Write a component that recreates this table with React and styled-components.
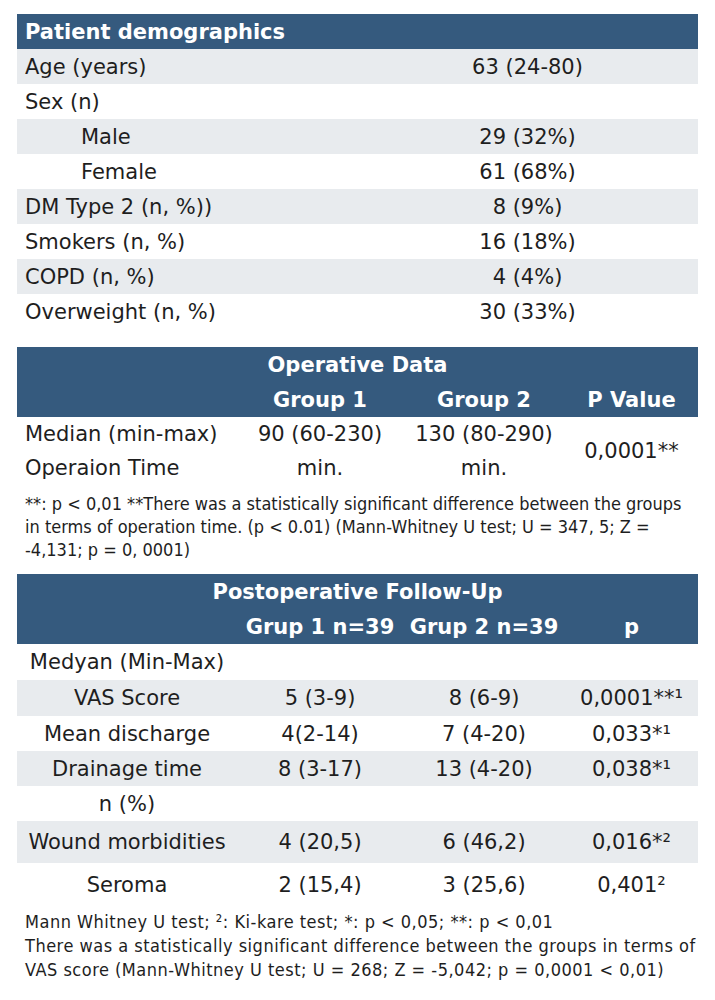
import React from 'react'
import styled, { createGlobalStyle } from 'styled-components'

const GlobalStyle = createGlobalStyle`
  body {
    margin: 0;
    background: #fff;
    color: #1e1e1e;
    font-family: "DejaVu Sans", "Noto Sans", sans-serif;
  }
`

const Page = styled.div`
  width: 681px;
  padding: 14px 17px 0 17px;
  display: flex;
  flex-direction: column;
`

const Table = styled.div`
  display: flex;
  flex-direction: column;
  margin-top: ${p => p.$gap || 0}px;
`

const TitleBar = styled.div`
  background: #355a7e;
  color: #fff;
  font-weight: bold;
  font-size: 21px;
  height: 35px;
  display: flex;
  align-items: center;
  justify-content: ${p => (p.$center ? 'center' : 'flex-start')};
  padding-left: ${p => (p.$center ? 0 : 8)}px;
`

const DemoRow = styled.div`
  display: grid;
  grid-template-columns: 340px 1fr;
  height: 35px;
  align-items: center;
  font-size: 21px;
  background: ${p => (p.$shade ? '#e8ebee' : '#fff')};
`

const DemoLabel = styled.div`
  padding-left: ${p => 8 + (p.$indent ? 56 : 0)}px;
`

const Cell = styled.div`
  text-align: center;
  white-space: nowrap;
`

const HeadRow = styled.div`
  display: grid;
  grid-template-columns: 220px 166px 162px 1fr;
  height: 35px;
  align-items: center;
  background: #355a7e;
  color: #fff;
  font-weight: bold;
  font-size: 21px;
`

const DataRow = styled.div`
  display: grid;
  grid-template-columns: 220px 166px 162px 1fr;
  align-items: center;
  min-height: ${p => p.$h || 35}px;
  font-size: 21px;
  background: ${p => (p.$shade ? '#e8ebee' : '#fff')};
`

const StackCell = styled.div`
  line-height: 34px;
  text-align: ${p => (p.$left ? 'left' : 'center')};
  padding-left: ${p => (p.$left ? 8 : 0)}px;
`

const Note = styled.p`
  margin: ${p => p.$top || 0}px 0 0 0;
  padding-left: 8px;
  font-family: "DejaVu Sans Condensed", "DejaVu Sans", sans-serif;
  font-stretch: condensed;
  font-size: ${p => p.$size || 17}px;
  letter-spacing: ${p => p.$track || 0}px;
  line-height: ${p => p.$lh || 23}px;
`

const demographics = [
  ['Age (years)', '63 (24-80)'],
  ['Sex (n)', ''],
  ['Male', '29 (32%)', true],
  ['Female', '61 (68%)', true],
  ['DM Type 2 (n, %))', '8 (9%)'],
  ['Smokers (n, %)', '16 (18%)'],
  ['COPD (n, %)', '4 (4%)'],
  ['Overweight (n, %)', '30 (33%)'],
]

const followUp = [
  { label: 'Medyan (Min-Max)', cells: ['', '', ''], h: 36 },
  { label: 'VAS Score', cells: ['5 (3-9)', '8 (6-9)', '0,0001**¹'], shade: true, h: 36 },
  { label: 'Mean discharge', cells: ['4(2-14)', '7 (4-20)', '0,033*¹'], h: 35 },
  { label: 'Drainage time', cells: ['8 (3-17)', '13 (4-20)', '0,038*¹'], shade: true, h: 35 },
  { label: 'n (%)', cells: ['', '', ''], h: 35 },
  { label: 'Wound morbidities', cells: ['4 (20,5)', '6 (46,2)', '0,016*²'], shade: true, h: 42 },
  { label: 'Seroma', cells: ['2 (15,4)', '3 (25,6)', '0,401²'], h: 43 },
]

const App = () => {
  return (
    <Page>
      <GlobalStyle />
      <Table>
        <TitleBar>Patient demographics</TitleBar>
        {demographics.map(([label, value, indent], i) => (
          <DemoRow key={label} $shade={i % 2 === 0}>
            <DemoLabel $indent={indent}>{label}</DemoLabel>
            <Cell>{value}</Cell>
          </DemoRow>
        ))}
      </Table>

      <Table $gap={18}>
        <TitleBar $center>Operative Data</TitleBar>
        <HeadRow>
          <Cell />
          <Cell>Group 1</Cell>
          <Cell>Group 2</Cell>
          <Cell>P Value</Cell>
        </HeadRow>
        <DataRow>
          <StackCell $left>
            Median (min-max)
            <br />
            Operaion Time
          </StackCell>
          <StackCell>
            90 (60-230)
            <br />
            min.
          </StackCell>
          <StackCell>
            130 (80-290)
            <br />
            min.
          </StackCell>
          <Cell>0,0001**</Cell>
        </DataRow>
        <Note $top={7} $size={18}>
          **: p &lt; 0,01 **There was a statistically significant difference between the groups in terms of
          operation time. (p &lt; 0.01) (Mann-Whitney U test; U = 347, 5; Z = -4,131; p = 0, 0001)
        </Note>
      </Table>

      <Table $gap={13}>
        <TitleBar $center>Postoperative Follow-Up</TitleBar>
        <HeadRow>
          <Cell />
          <Cell>Grup 1 n=39</Cell>
          <Cell>Grup 2 n=39</Cell>
          <Cell>p</Cell>
        </HeadRow>
        {followUp.map(row => (
          <DataRow key={row.label} $shade={row.shade} $h={row.h}>
            <Cell>{row.label}</Cell>
            {row.cells.map((c, j) => (
              <Cell key={j}>{c}</Cell>
            ))}
          </DataRow>
        ))}
        <Note $top={4} $lh={24} $size={18} $track={0.5}>
          Mann Whitney U test; ²: Ki-kare test; *: p &lt; 0,05; **: p &lt; 0,01
          <br />
          There was a statistically significant difference between the groups in terms of VAS score
          (Mann-Whitney U test; U = 268; Z = -5,042; p = 0,0001 &lt; 0,01)
        </Note>
      </Table>
    </Page>
  )
}

export default App
